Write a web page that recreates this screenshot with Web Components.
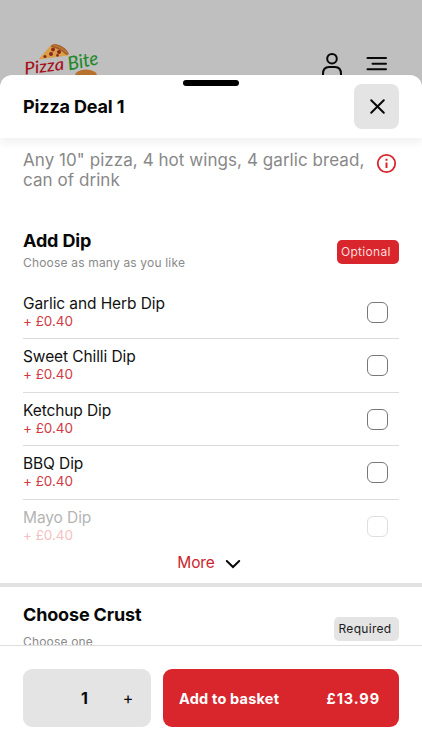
<!DOCTYPE html>
<html lang="en">
<head>
<meta charset="utf-8">
<title>Pizza Bite</title>
<style>
  * { box-sizing: border-box; }
  html, body { height: 100%; }
  body {
    margin: 0;
    overflow: hidden;
    background: #bfbfbf;
    color: #080808;
    font-family: Inter, "Liberation Sans", sans-serif;
  }
</style>
</head>
<body>
<deal-page></deal-page>

<script>
// components/site-header.js
class SiteHeader extends HTMLElement {
  constructor() {
    super();
    this.attachShadow({ mode: 'open' });
  }

  connectedCallback() {
    this.shadowRoot.innerHTML = `
      <style>
        :host { display: flex; flex: none; box-sizing: border-box; height: 75px; padding: 39px 35px 0 20px; overflow: hidden; }
        .logo { flex: none; }
        .tools { display: flex; gap: 23px; margin-left: auto; padding-top: 13px; }
        svg { display: block; flex: none; }
        .word { font-family: Lato, sans-serif; font-style: italic; font-weight: 500; }
      </style>
      <svg class="logo" width="84" height="44" viewBox="0 0 84 44">
        <path d="M18.500 20.500 L31 6 Q40 8 46 14 L48.500 16.500 Q36 18 18.500 20.500Z" fill="#d9a047"/>
        <path d="M30.500 7.500 Q32 4 36.500 5.300 Q46 8 48.800 14.500 Q48 17 45 15 Q40 10 30.500 7.500Z" fill="#a3602c"/>
        <path d="M33 6 Q42 8 47 14" fill="none" stroke="#c47c32" stroke-width="1.2"/>
        <g fill="#8c2420">
          <circle cx="33" cy="10.500" r="1.900"/><circle cx="39" cy="13" r="2"/>
          <circle cx="31" cy="15" r="2"/><circle cx="37.500" cy="16.400" r="1.300"/><circle cx="25" cy="17.500" r="1.500"/>
        </g>
        <text class="word" x="5" y="35.500" font-size="17" textLength="40" lengthAdjust="spacingAndGlyphs" fill="#a5121c" transform="rotate(-7 5 35.500)">Pizza</text>
        <text class="word" x="49" y="31.500" font-size="19" textLength="31" lengthAdjust="spacingAndGlyphs" fill="#248a2c" transform="rotate(-12 49 31.500)">Bite</text>
        <path d="M55 36 Q56 31 66 30.500 Q76 31 77 36Z" fill="#b8722f"/>
      </svg>
      <div class="tools">
        <svg width="22" height="26" viewBox="0 0 22 26" fill="none" stroke="#080808" stroke-width="2">
          <circle cx="11" cy="6.700" r="4.800"/>
          <path d="M2 26 V22 Q2 15 8 15 H14 Q20 15 20 22 V26"/>
        </svg>
        <svg width="21" height="20" viewBox="0 0 21 20" fill="none" stroke="#080808" stroke-width="2" stroke-linecap="round">
          <path d="M1.500 6H20M6.500 11.700H20M1.500 17.300H20"/>
        </svg>
      </div>
    `;
  }
}
customElements.define('site-header', SiteHeader);

// components/tag-badge.js
class TagBadge extends HTMLElement {
  constructor() {
    super();
    this.attachShadow({ mode: 'open' });
  }

  connectedCallback() {
    this.shadowRoot.innerHTML = `
      <style>
        :host {
          display: block; flex: none; box-sizing: border-box; width: 65px; height: 24px; padding: 0 0 0 4.5px;
          border-radius: 5px; background: #e4e4e4; color: #1b1b1b;
          font-size: 12px; line-height: 24px; letter-spacing: .3px; white-space: nowrap;
        }
        :host([kind="optional"]) { width: 62.5px; background: #d8262c; color: #fbdcdd; }
      </style>
      <slot></slot>
    `;
  }
}
customElements.define('tag-badge', TagBadge);

// components/option-group.js
class OptionGroup extends HTMLElement {
  constructor() {
    super();
    this.attachShadow({ mode: 'open' });
  }

  connectedCallback() {
    this.shadowRoot.innerHTML = `
      <style>
        :host { display: block; padding: 0 23px; }
        header { display: flex; justify-content: space-between; align-items: flex-start; }
        h2 { margin: 0; font-size: 18px; line-height: 24px; font-weight: 700; letter-spacing: -.15px; }
        p { margin: 0; padding-top: var(--hint-top, 1px); font-size: 12px; line-height: 17px; letter-spacing: .18px; color: #8a8a8a; }
        tag-badge { margin-top: var(--badge-top, 11px); }
      </style>
      <header>
        <div>
          <h2>${this.getAttribute('heading')}</h2>
          <p>${this.getAttribute('hint')}</p>
        </div>
        <tag-badge kind="${this.getAttribute('kind').toLowerCase()}">${this.getAttribute('kind')}</tag-badge>
      </header>
      <slot></slot>
    `;
  }
}
customElements.define('option-group', OptionGroup);

// components/option-row.js
class OptionRow extends HTMLElement {
  constructor() {
    super();
    this.attachShadow({ mode: 'open' });
  }

  connectedCallback() {
    this.shadowRoot.innerHTML = `
      <style>
        :host {
          display: flex; box-sizing: border-box; height: 53.4px; padding: 9px 11px 0 0;
          justify-content: space-between; border-bottom: 1px solid #dcdcdc;
        }
        :host([faded]) { border-bottom-color: transparent; }
        :host([faded]) .name { color: #b4b4b4; }
        :host([faded]) .price { color: #f3bfc2; }
        :host([faded]) .box { border-color: #dedede; }
        .name { font-size: 15.5px; line-height: 18px; letter-spacing: -.1px; color: #111; }
        .price { font-size: 13.500px; line-height: 17px; letter-spacing: -.05px; color: #d23a43; }
        .box { width: 21px; height: 21px; margin-top: 7px; box-sizing: border-box; border: 1.3px solid #777; border-radius: 6px; }
      </style>
      <div>
        <div class="name"><slot></slot></div>
        <div class="price">+ ${this.getAttribute('price')}</div>
      </div>
      <div class="box" role="checkbox" aria-checked="false"></div>
    `;
  }
}
customElements.define('option-row', OptionRow);

// components/basket-bar.js
class BasketBar extends HTMLElement {
  constructor() {
    super();
    this.attachShadow({ mode: 'open' });
  }

  connectedCallback() {
    this.shadowRoot.innerHTML = `
      <style>
        :host {
          display: flex; flex: none; box-sizing: border-box; height: 105px; padding: 23px 23px 0;
          gap: 12px; border-top: 1px solid #dedede; background: #fff;
        }
        .qty, .add { display: flex; box-sizing: border-box; height: 58px; align-items: center; border-radius: 9px; line-height: 18px; }
        .qty { width: 128px; padding: 0 17px 0 58px; justify-content: space-between; background: #e4e4e4; }
        .qty b { font-size: 16px; }
        .qty span { font-size: 16px; width: 12px; text-align: center; }
        .add { flex: 1; padding: 1px 19px 0 16px; justify-content: space-between; background: #d8262c; color: #fff; font-size: 14.5px; font-weight: 700; }
        .label { letter-spacing: .2px; }
        .total { letter-spacing: .9px; }
      </style>
      <div class="qty"><b>1</b><span>+</span></div>
      <div class="add"><span class="label">Add to basket</span><span class="total">${this.getAttribute('total')}</span></div>
    `;
  }
}
customElements.define('basket-bar', BasketBar);

// components/bottom-sheet.js
class BottomSheet extends HTMLElement {
  constructor() {
    super();
    this.attachShadow({ mode: 'open' });
  }

  connectedCallback() {
    this.shadowRoot.innerHTML = `
      <style>
        :host { display: flex; flex: 1; min-height: 0; flex-direction: column; position: relative; background: #fff; border-radius: 12px 12px 0 0; }
        .handle { position: absolute; top: 4.500px; left: 183px; width: 56px; height: 6px; border-radius: 3px; background: #000; }
        header {
          display: flex; flex: none; box-sizing: border-box; height: 63px; padding: 9px 23px 0;
          justify-content: space-between; align-items: flex-start;
          border-radius: 12px 12px 0 0; box-shadow: 0 5px 10px rgba(0, 0, 0, .06);
        }
        h1 { margin: 0; font-size: 18px; line-height: 45px; font-weight: 700; letter-spacing: -.15px; }
        .close { display: grid; place-items: center; width: 45px; height: 45px; border-radius: 8px; background: #e4e4e4; }
        main { flex: 1; min-height: 0; overflow: hidden; }
      </style>
      <header>
        <h1>${this.getAttribute('heading')}</h1>
        <div class="close" role="button" aria-label="Close">
          <svg width="18" height="17" viewBox="0 0 18 17" stroke="#080808" stroke-width="2" stroke-linecap="round"><path d="M3.200 2.200 15.800 14.800M15.800 2.200 3.200 14.800"/></svg>
        </div>
      </header>
      <div class="handle"></div>
      <main><slot></slot></main>
      <slot name="footer"></slot>
    `;
  }
}
customElements.define('bottom-sheet', BottomSheet);

// components/deal-page.js
class DealPage extends HTMLElement {
  constructor() {
    super();
    this.attachShadow({ mode: 'open' });
  }

  connectedCallback() {
    const dips = ['Garlic and Herb Dip', 'Sweet Chilli Dip', 'Ketchup Dip', 'BBQ Dip', 'Mayo Dip'];

    this.shadowRoot.innerHTML = `
      <style>
        :host { display: flex; flex-direction: column; height: 750px; }
        .intro { display: flex; height: 90.5px; box-sizing: border-box; padding: 12px 25px 0 23px; justify-content: space-between; }
        .intro p { margin: 0; width: 346px; font-size: 17px; line-height: 20px; letter-spacing: .06px; color: #888; }
        .intro svg { flex: none; margin-top: 3px; }
        .rows { padding-top: 15.500px; }
        .more { display: flex; box-sizing: border-box; height: 30px; padding: 0 4px 10px 0; align-items: center; justify-content: center; gap: 10px; color: #c9252d; font-size: 15.5px; line-height: 20px; letter-spacing: -.1px; }
        .more svg { margin-top: 2px; }
        hr { height: 4px; margin: 0; border: 0; background: #e2e2e2; }
        .crust { padding-top: 16px; --badge-top: 14px; --hint-top: 6.5px; }
      </style>
      <site-header></site-header>
      <bottom-sheet heading="Pizza Deal 1">
        <div class="intro">
          <p>Any 10" pizza, 4 hot wings, 4 garlic bread, can of drink</p>
          <svg width="21" height="21" viewBox="0 0 21 21" fill="none" stroke="#d8262c" stroke-width="1.800">
            <circle cx="10.500" cy="10.500" r="8.700"/>
            <path d="M10.500 9.500V15M10.500 5.800V7.800" stroke-width="2"/>
          </svg>
        </div>
        <option-group heading="Add Dip" hint="Choose as many as you like" kind="Optional">
          <div class="rows">
            ${dips.map((dip, i) => `<option-row price="£0.40"${i === 4 ? ' faded' : ''}>${dip}</option-row>`).join('')}
          </div>
        </option-group>
        <div class="more">
          <span>More</span>
          <svg width="16" height="10" viewBox="0 0 16 10" fill="none" stroke="#080808" stroke-width="2" stroke-linecap="round"><path d="M1.800 2 8 8 14.200 2"/></svg>
        </div>
        <hr>
        <option-group class="crust" heading="Choose Crust" hint="Choose one" kind="Required"></option-group>
        <basket-bar slot="footer" total="£13.99"></basket-bar>
      </bottom-sheet>
    `;
  }
}
customElements.define('deal-page', DealPage);
</script>
</body>
</html>
